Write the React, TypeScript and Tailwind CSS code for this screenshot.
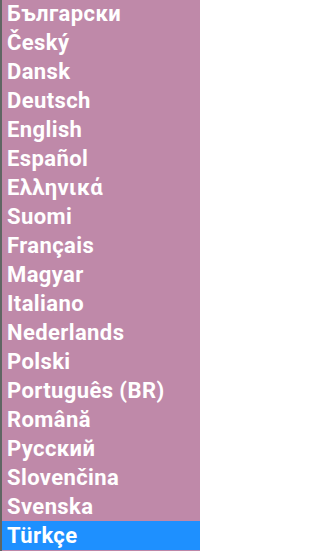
import React from "react";

const langs = [
  "Български",
  "Český",
  "Dansk",
  "Deutsch",
  "English",
  "Español",
  "Ελληνικά",
  "Suomi",
  "Français",
  "Magyar",
  "Italiano",
  "Nederlands",
  "Polski",
  "Português (BR)",
  "Română",
  "Русский",
  "Slovenčina",
  "Svenska",
  "Türkçe",
];

export default function App() {
  return (
    <div className="w-[200px] h-[551px] overflow-hidden bg-[#bf89a9] border-l-[2px] border-[#5f6663] font-['Roboto',sans-serif]">
      <ul className="-mt-px">
        {langs.map((l, i) => (
          <li
            key={l}
            className={
              i === langs.length - 1
                ? "h-[29px] leading-[29px] pl-[5px] text-[22px] tracking-[0.4px] font-bold text-white bg-[#1e90ff]"
                : "h-[29px] leading-[29px] pl-[5px] text-[22px] tracking-[0.4px] font-bold text-white"
            }
          >
            {l}
          </li>
        ))}
      </ul>
    </div>
  );
}
